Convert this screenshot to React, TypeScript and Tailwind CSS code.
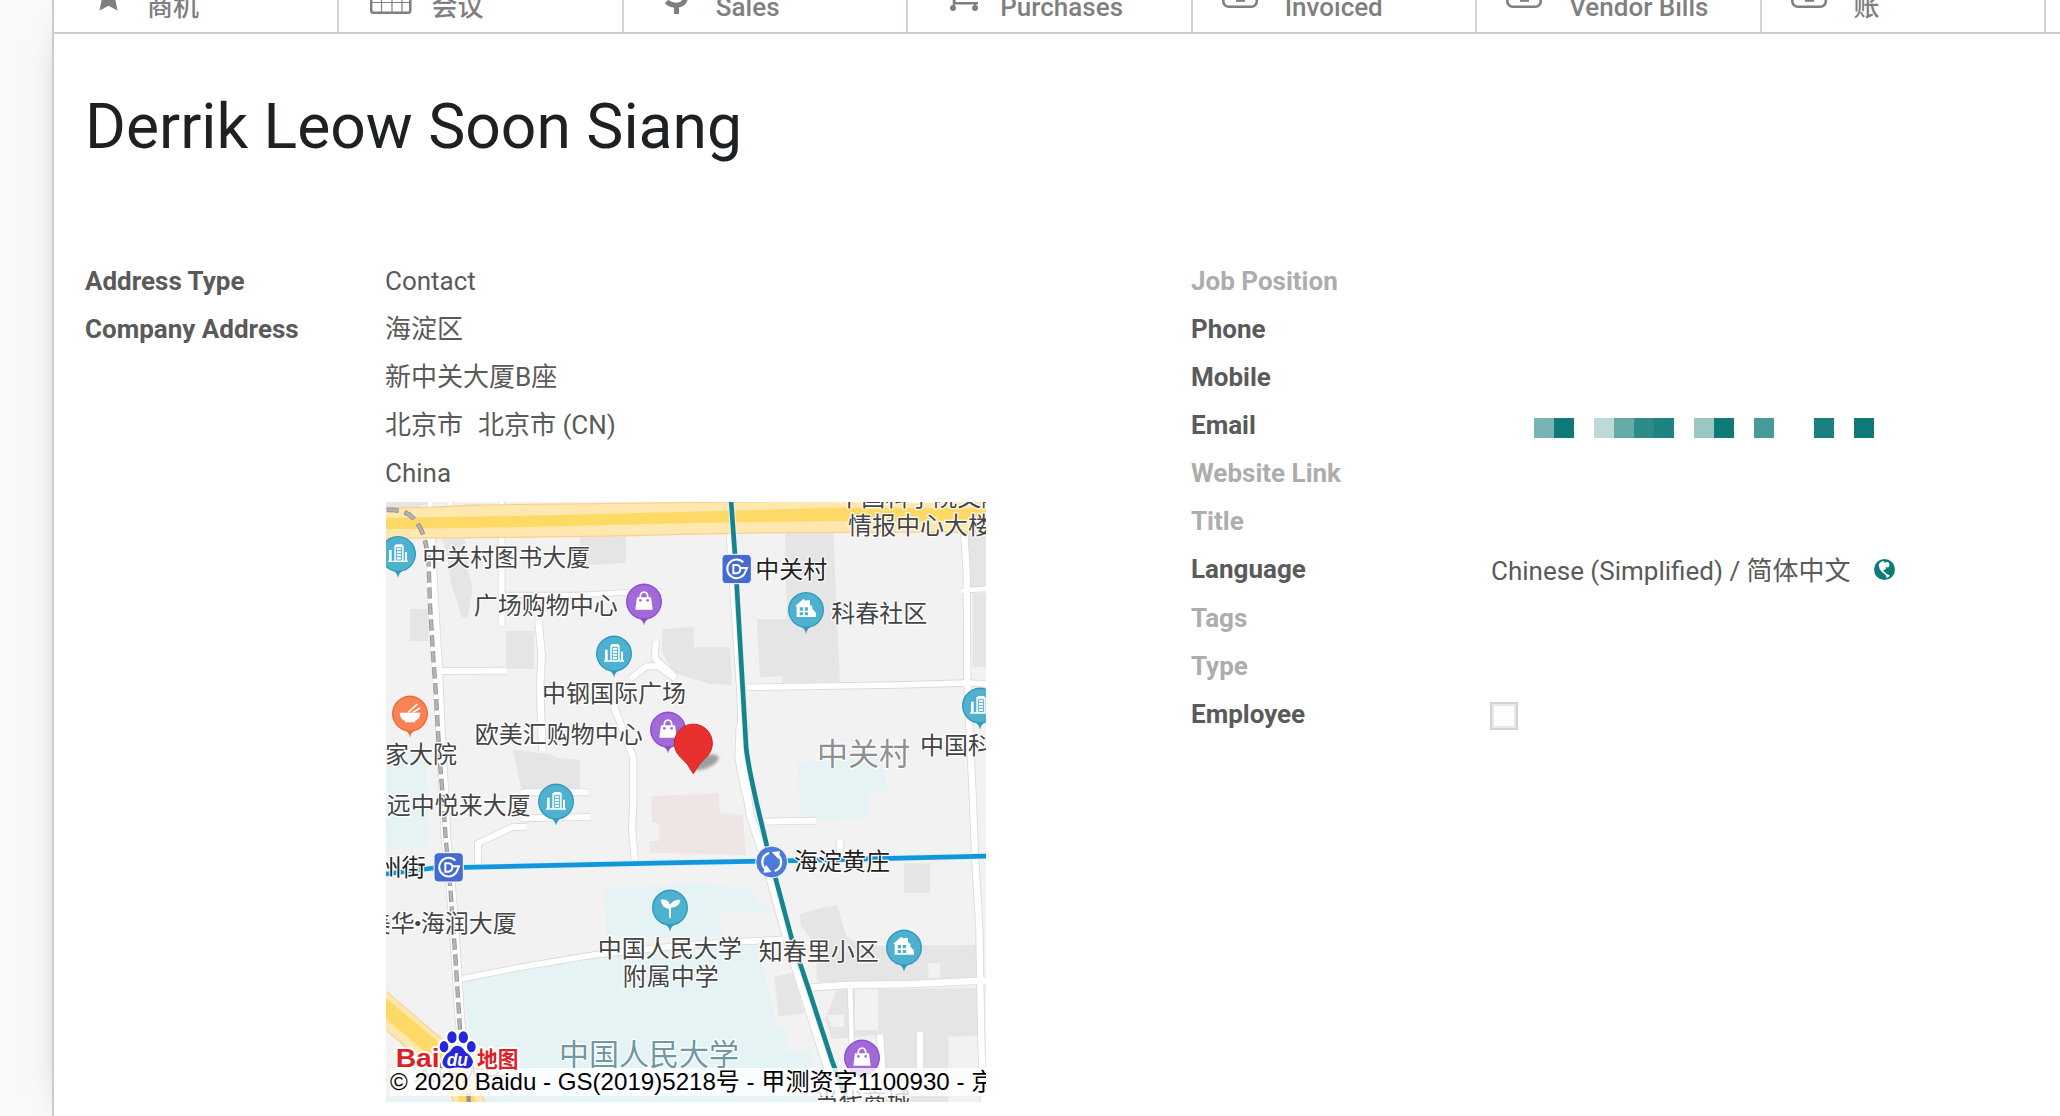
import React from "react";

const sans = "font-[Roboto,'Noto_Sans_CJK_SC',sans-serif]";

const icons: Record<string, React.ReactNode> = {
  star: <path fill="#7f7f7f" d="M53.5-19l4 9 9.500 1-7 7 2.500 12.500-9-4.700-9 4.700L47-2l-7-7 9.500-1z" />,
  calendar: (
    <g stroke="#7f7f7f" fill="none">
      <path strokeWidth="2.500" d="M32.200-10V10.500Q32.200 12.800 34.500 12.800H69Q71.300 12.800 71.300 10.500V-10" />
      <path strokeWidth="1.200" d="M42.500-8V12M53-8V12M63-8V12M32 2.500H71" />
    </g>
  ),
  dollar: (
    <g stroke="#7f7f7f" fill="none">
      <path strokeWidth="5" d="M42.500 1.500Q46.500 5.500 53 5.300Q61 4.500 61.500-3" />
      <path strokeWidth="5" d="M52.500 5V14" />
    </g>
  ),
  cart: (
    <g>
      <path d="M46-2V3.300H70" stroke="#7f7f7f" strokeWidth="2.600" fill="none" />
      <circle cx="45" cy="8" r="3" fill="#7f7f7f" />
      <circle cx="67" cy="8" r="3" fill="#7f7f7f" />
      <path d="M46.500 0L45.500 8M67 3V8" stroke="#7f7f7f" strokeWidth="2" />
    </g>
  ),
  money: (
    <g>
      <rect x="30.300" y="-18" width="33.500" height="24.700" rx="5.500" fill="none" stroke="#7f7f7f" strokeWidth="2.600" />
      <rect x="43" y="-3" width="9" height="4.800" fill="#7f7f7f" />
    </g>
  ),
};

const tabs = [
  ["star", "商机"],
  ["calendar", "会议"],
  ["dollar", "Sales"],
  ["cart", "Purchases"],
  ["money", "Invoiced"],
  ["money", "Vendor Bills"],
  ["money", "账"],
];

const emailBlocks: (string | null)[] = [
  "#78b4b2", "#0f7b78", null, "#bddad9", "#64aaa7", "#2d8b88", "#1f8481", null,
  "#9ac6c4", "#0f7b78", null, "#47999a", null, null, "#1a817e", null, "#0f7b78",
];

function GlobeIcon() {
  return (
    <svg className="h-[21px] w-[21px]" viewBox="0 0 63 63">
      <circle cx="31.500" cy="31.500" r="31.500" fill="#0f7b78" />
      <path
        fill="#fff"
        d="M14 16Q18 9 27 6L32 9 28 13 35 10 42 9Q48 12 46 21L42 26 38 23 35 26 37 29 31 32 27 37 33 39 36 44 43 47 48 50Q44 55 37 57L37 51 31 44 23 38 17 30 15 22z"
      />
    </svg>
  );
}

const greys = [
  "18,21 150,21 110,40 18,35",
  "185,130 255,130 265,230 278,285 262,372 245,365 212,260 200,170",
  "600,125 738,125 738,203 602,212",
  "90,342 145,342 145,438 90,438",
  "378,408 462,408 462,522 378,522",
  "848,402 940,396 942,457 1050,457 1056,570 990,566 930,550 880,530 845,470",
  "1215,112 1360,112 1380,560 1208,563 1205,543 1140,547 1130,372 1220,372",
  "1765,112 1818,112 1818,275 1765,275",
  "1778,295 1818,295 1818,515 1778,517",
  "398,763 460,772 510,778 525,788 600,795 600,880 425,884",
  "1260,1260 1280,1250 1370,1230 1400,1325 1440,1352 1790,1350 1790,1455 1310,1462 1310,1355 1262,1290",
  "1572,1105 1650,1105 1650,1193 1572,1193",
  "1183,1445 1240,1433 1272,1555 1195,1565",
  "1370,1483 1790,1480 1798,1622 1705,1625 1705,1821 1500,1821 1500,1620 1355,1632 1335,1572 1345,1550",
];

const teals = [
  "18,775 135,770 140,850 143,1055 18,1062",
  "1255,800 1400,795 1405,765 1500,775 1525,885 1465,897 1468,965 1310,978 1310,965 1258,960",
  "672,1182 980,1163 985,1168 1110,1180 1130,1225 1165,1233 1172,1252 1020,1248 1025,1325 870,1325 680,1322",
  "250,1460 600,1390 870,1355 1130,1345 1170,1500 1190,1600 1222,1605 1220,1668 1290,1667 1310,1821 18,1821 18,1800 290,1800",
];

const roads: [string, number][] = [
  ["M152 128L160 300 172 500 182 720 192 900 198 1030 212 1170 226 1350 238 1550 252 1720", 26],
  ["M150 15V38M210 15V36M365 15V30", 16],
  ["M365 125V390", 18],
  ["M372 300L600 300 740 292 848 290", 14],
  ["M475 377L485 480 480 580 487 768", 20],
  ["M180 528L380 527", 18],
  ["M828 437L824 490 885 545M750 552L800 514 835 514 885 550", 18],
  ["M700 630L742 740 760 790 760 920 756 1000 765 1100", 19],
  ["M422 895L440 892 625 892M422 970L632 966M440 995L395 997 294 1045 294 1108", 18],
  ["M240 1452L430 1415 640 1380 900 1352 1040 1342 1210 1333", 17],
  ["M1050 100L1056 200 1083 600 1086 700 1086 790 1110 960 1160 1110 1215 1310 1260 1460 1350 1740 1385 1830", 22],
  ["M1088 688L1084 790 1106 900", 36],
  ["M1100 577L1550 570 1760 564 1830 567", 17],
  ["M1752 105L1760 230 1762 560 1778 900 1786 1100 1798 1300 1804 1640 1812 1830", 19],
  ["M1745 289L1765 285 1830 281", 14],
  ["M1155 980L1220 978 1310 977", 18],
  ["M1380 1036V1090", 20],
  ["M1285 1478L1400 1470 1600 1467 1830 1456", 19],
  ["M1410 1465L1415 1645", 14],
  ["M1500 1618L1508 1740M1620 1612V1740", 19],
];

const railway = "M145 175L150 330 158 460 168 600 178 780 188 900 197 1030 211 1180 225 1370 236 1540 246 1700";
const lineTen = "M1053 15L1065 180 1098 750Q1100 790 1129 920L1160 1050 1235 1330 1285 1480 1357 1700 1405 1830";
const lineBlue = "M10 1138L160 1119 255 1117 900 1103 1240 1097 1830 1083";

const teal = "#4db1cf";
const tealEdge = "#3198ba";
type Glyph = "building" | "bag" | "house" | "bowl" | "sprout";

const glyphs: Record<Glyph, React.ReactNode> = {
  building: (
    <g>
      <path fill="#fff" d="M-27-12H-19V23H-27zM-11-24L-6-29H12L17-24V23H-11zM21-6H27V23H21zM-30 20H30V24H-30z" />
      <path stroke={teal} strokeWidth="3" fill="none" d="M-5-19H11V18H-5zM-5-10H11M-5-1H11M-5 8H11" />
    </g>
  ),
  bag: (
    <g>
      <path fill="#fff" d="M-21-13H21L26 24H-26z" />
      <path fill="none" stroke="#fff" strokeWidth="5" d="M-11-10V-18Q-10-28 0-29Q10-28 11-18V-10" />
      <circle cx="-11" cy="-4" r="4" fill="#a26ad8" />
      <circle cx="11" cy="-4" r="4" fill="#a26ad8" />
    </g>
  ),
  house: (
    <g>
      <path fill="#fff" d="M-32-12L-8-33 0-27V-29H12V-16L20-10 18-5 30 9V21H-28V-10z" />
      <path fill={teal} d="M-19-8H-9V2H-19zM-4-8H6V2H-4zM-19 7H-9V16H-19zM-4 7H6V16H-4z" />
    </g>
  ),
  bowl: (
    <g>
      <path fill="#fff" d="M-31-3H31Q30 16 15 22V26H-15V22Q-30 16-31-3z" />
      <path stroke="#fff" strokeWidth="5" d="M-6-3L22-29M8-3L30-17" />
    </g>
  ),
  sprout: (
    <g>
      <path fill="#fff" d="M-28-24Q-4-26 0-8Q8-24 31-24Q30-2 3 0V31H-3V4Q-26 0-28-24z" />
    </g>
  ),
};

function Pin({ x, y, glyph, fill = teal, edge = tealEdge }: { x: number; y: number; glyph: Glyph; fill?: string; edge?: string }) {
  return (
    <g transform={`translate(${x} ${y})`}>
      <path fill={edge} d="M0 72Q-3 55-14 52A54 54 0 1 1 14 52Q3 55 0 72z" />
      <circle r="50" fill={fill} />
      {glyphs[glyph]}
    </g>
  );
}

type Label = { t: string; x: number; y: number; size?: number; fill?: string };
const labels: Label[] = [
  { t: "中关村图书大厦", x: 127, y: 214 },
  { t: "广场购物中心", x: 281, y: 358 },
  { t: "中钢国际广场", x: 486, y: 622 },
  { t: "欧美汇购物中心", x: 284, y: 743 },
  { t: "家大院", x: 15, y: 803 },
  { t: "远中悦来大厦", x: 20, y: 957 },
  { t: "州街", x: -7, y: 1142, fill: "#222" },
  { t: "美华", x: -40, y: 1312 },
  { t: "海润大厦", x: 122, y: 1312 },
  { t: "·", x: 77, y: 1312 },
  { t: "中国人民大学", x: 653, y: 1385 },
  { t: "附属中学", x: 728, y: 1469 },
  { t: "知春里小区", x: 1136, y: 1396 },
  { t: "海淀黄庄", x: 1242, y: 1126, fill: "#222" },
  { t: "中关村", x: 1126, y: 250, fill: "#222" },
  { t: "科春社区", x: 1354, y: 382 },
  { t: "中国科学院文献", x: 1372, y: 32 },
  { t: "情报中心大楼", x: 1404, y: 118 },
  { t: "中国科", x: 1620, y: 777 },
  { t: "中关村", x: 1311, y: 811, size: 93, fill: "#8f8f8f" },
  { t: "中国人民大学", x: 537, y: 1710, size: 90, fill: "#6f98a3" },
  { t: "当代商城", x: 1304, y: 1844 },
  { t: "人民大学", x: 98, y: 1757, fill: "#777" },
];

function Station({ x, y }: { x: number; y: number }) {
  return (
    <g transform={`translate(${x} ${y})`}>
      <rect x="-44" y="-44" width="88" height="88" rx="12" fill="#456bd3" stroke="#fff" strokeWidth="3" />
      <g fill="none" stroke="#fff" strokeWidth="6">
        <path d="M20-20A28 28 0 1 0 27 6L31-3H12" />
        <path d="M-10-12H0Q11-11 11 0T0 13H-10z" />
      </g>
    </g>
  );
}

function CityMap() {
  return (
    <svg className="ml-px block h-[600px] w-[600px]" viewBox="18 21 1800 1800">
      <defs>
        <filter id="soft" x="-30%" y="-50%" width="160%" height="200%">
          <feGaussianBlur stdDeviation="4" />
        </filter>
      </defs>
      <rect x="18" y="21" width="1800" height="1800" fill="#f2f2f2" />
      {greys.map((p) => <polygon key={p} points={p} fill="#e5e5e5" />)}
      <path fill="#f2f2f2" d="M1645 1405H1680V1448H1645zM1425 1483H1495V1605H1425zM1340 1560L1392 1560V1595H1355z" />
      {teals.map((p) => <polygon key={p} points={p} fill="#e5f3f4" />)}
      <polygon points="815,903 1015,895 1020,955 1088,960 1098,1080 810,1073 810,1038 838,1038 838,985 815,983" fill="#efe5e4" />
      {roads.map(([d, w]) => <path key={d} d={d} fill="none" stroke="#d9d9d9" strokeWidth={w + 5} />)}
      {roads.map(([d, w]) => <path key={d} d={d} fill="none" stroke="#fff" strokeWidth={w} />)}

      <polygon points="10,38 130,38 290,30 920,23 1830,10 1830,112 1250,112 900,118 770,122 380,127 10,130" fill="#ffe7b0" stroke="#ffcf8a" strokeWidth="4" />
      <polygon points="10,68 450,62 900,51 1370,38 1830,40 1830,78 1370,78 900,85 450,96 10,103" fill="#ffd966" />
      <path d="M-10 1523L185 1690Q250 1740 272 1840" fill="none" stroke="#ffcf8a" strokeWidth="92" />
      <path d="M-10 1523L185 1690Q250 1740 272 1840" fill="none" stroke="#ffe7b0" strokeWidth="85" />
      <path d="M-10 1517L175 1672Q250 1730 266 1840" fill="none" stroke="#ffd966" strokeWidth="48" />

      <path d={railway} fill="none" stroke="#949494" strokeWidth="13" />
      <path d={railway} fill="none" stroke="#fff" strokeWidth="14" strokeDasharray="14 34" strokeDashoffset="-40" />
      <path d={railway} fill="none" stroke="#b5b5b5" strokeWidth="8" strokeDasharray="30 18" strokeDashoffset="-8" />
      <path d="M266 1795V1825" stroke="#949494" strokeWidth="13" />
      <path d="M20 45Q80 42 105 75Q130 105 140 160" fill="none" stroke="#949494" strokeWidth="14" strokeDasharray="36 18" />
      <path d="M22 45Q80 42 105 75Q130 105 140 160" fill="none" stroke="#b5b5b5" strokeWidth="8" strokeDasharray="32 22" />

      <path d={lineTen} fill="none" stroke="#e4f2f2" strokeWidth="20" />
      <path d={lineTen} fill="none" stroke="#17838d" strokeWidth="14" />
      <path d={lineBlue} fill="none" stroke="#e2f1fa" strokeWidth="20" />
      <path d={lineBlue} fill="none" stroke="#1296db" strokeWidth="14" />

      <Station x={1070} y={222} />
      <Station x={206} y={1117} />
      <g transform="translate(1175 1101)">
        <circle r="48" fill="#4a7bd8" stroke="#fff" strokeWidth="3" />
        <path d="M-8-27A28 28 0 0 0-17 22M9 27A28 28 0 0 0 17-22" fill="none" stroke="#fff" strokeWidth="7" />
        <path d="M0-30L25-32 21-8zM0 30L-25 32-17 8z" fill="#fff" />
      </g>

      <Pin x={54} y={177} glyph="building" />
      <Pin x={792} y={320} glyph="bag" fill="#a26ad8" edge="#8d4dd0" />
      <Pin x={702} y={476} glyph="building" />
      <Pin x={90} y={656} glyph="bowl" fill="#fa8355" edge="#ef6a3c" />
      <Pin x={864} y={704} glyph="bag" fill="#a26ad8" edge="#8d4dd0" />
      <Pin x={528} y={920} glyph="building" />
      <Pin x={1278} y={345} glyph="house" />
      <Pin x={1800} y={632} glyph="building" />
      <Pin x={870} y={1238} glyph="sprout" />
      <Pin x={1572} y={1358} glyph="house" />
      <Pin x={1446} y={1688} glyph="bag" fill="#a26ad8" edge="#8d4dd0" />

      {labels.map((l) => (
        <text key={`${l.t}${l.x}`} x={l.x} y={l.y} fontSize={l.size ?? 72} fill={l.fill ?? "#444"} stroke="#fff" strokeWidth="7" strokeLinejoin="round" paintOrder="stroke" className="font-['Noto_Sans_CJK_SC',sans-serif]">
          {l.t}
        </text>
      ))}

      <ellipse cx="972" cy="802" rx="46" ry="19" fill="#666" opacity="0.6" transform="rotate(-20 972 802)" filter="url(#soft)" />
      <path d="M940 836Q925 806 898 783A57 57 0 1 1 982 783Q955 806 940 836z" fill="#e8302f" stroke="#c52523" strokeWidth="3" />

      <rect x="30" y="1719" width="1788" height="84" fill="#fff" opacity="0.8" />
      <g stroke="#fff" strokeWidth="12" strokeLinejoin="round" paintOrder="stroke" className="font-['Liberation_Sans','Noto_Sans_CJK_SC',sans-serif] font-bold">
        <text x="47" y="1717" fontSize="80" fill="#dd1f26" textLength="132" lengthAdjust="spacingAndGlyphs">Bai</text>
        <text x="291" y="1715" fontSize="66" fill="#dd1f26" textLength="124" lengthAdjust="spacingAndGlyphs">地图</text>
        <g fill="#2626dc">
          <ellipse cx="216" cy="1627" rx="14" ry="18" />
          <ellipse cx="250" cy="1627" rx="14" ry="18" />
          <ellipse cx="192" cy="1655" rx="13" ry="17" />
          <ellipse cx="274" cy="1655" rx="13" ry="17" />
          <path d="M233 1652Q246 1652 256 1670Q280 1688 279 1702Q275 1722 256 1720Q233 1715 212 1720Q190 1722 187 1702Q188 1684 211 1668Q220 1652 233 1652z" />
        </g>
      </g>
      <text x="200" y="1713" fontSize="54" fill="#fff" textLength="64" lengthAdjust="spacingAndGlyphs" className="font-['Liberation_Sans',sans-serif] font-bold italic">du</text>
      <text x="30" y="1784" fontSize="72.300" fill="#000" className="font-['Liberation_Sans','Noto_Sans_CJK_SC',sans-serif]">
        © 2020 Baidu - GS(2019)5218号 - 甲测资字1100930 - 京
      </text>
    </svg>
  );
}

function Row({ label, muted, tall, children }: { label: string; muted?: boolean; tall?: boolean; children?: React.ReactNode }) {
  return (
    <div className={`flex items-start ${tall ? "h-[49px]" : "h-12"}`}>
      <div className={`w-[299px] font-bold ${muted ? "text-[#adadad]" : "text-[#5a5a5a]"}`}>{label}</div>
      {children}
    </div>
  );
}

export default function App() {
  return (
    <div className={`h-[1116px] w-[2060px] overflow-hidden bg-[#f9f9f9] pl-[52px] text-[#5a5a5a] ${sans}`}>
      <main className="h-full border-l-2 border-[#c8cdd2] bg-white shadow-[0_10px_40px_-30px_#000]">
        <nav className="flex h-[34px] overflow-hidden border-b-2 border-[#c9ccd0] text-[26px] text-[#7f7f7f]">
          <div className="ml-px grid w-[1991px] shrink-0 grid-cols-7">
            {tabs.map(([icon, text]) => (
              <div key={text} className="flex h-8 items-end border-r-2 border-[#d0d4dd]">
                <svg className="h-8 w-[92px] shrink-0" viewBox="0 0 92 32">{icons[icon]}</svg>
                <span className="mb-[10px] leading-[30px] font-medium whitespace-nowrap">{text}</span>
              </div>
            ))}
          </div>
        </nav>

        <div className="pl-[31px]">
          <h1 className="pt-[55px] text-[62.4px] leading-[76px] font-normal text-[#1d2124]">Derrik Leow Soon Siang</h1>

          <div className="flex pt-[101px] text-[26px] leading-[30px]">
            <section className="flex w-[1106px] items-start">
              <div className="w-[300px] shrink-0 font-bold">
                <div className="h-12">Address Type</div>
                <div className="h-12">Company Address</div>
              </div>
              <div>
                <div className="h-12">Contact</div>
                <div className="h-12">海淀区</div>
                <div className="h-12">新中关大厦B座</div>
                <div className="flex h-12 gap-[15px]">
                  <span>北京市</span>
                  <span>北京市 (CN)</span>
                </div>
                <div className="h-11">China</div>
                <CityMap />
              </div>
            </section>

            <section>
              <Row label="Job Position" muted />
              <Row label="Phone" />
              <Row label="Mobile" />
              <Row label="Email">
                <div className="flex pt-[8px] pl-[44px]">
                  {emailBlocks.map((c, i) => (
                    <div key={i} className="size-5" style={{ backgroundColor: c ?? "transparent" }} />
                  ))}
                </div>
              </Row>
              <Row label="Website Link" muted />
              <Row label="Title" muted />
              <Row label="Language" tall>
                <div className="flex pt-0.5 pl-px">
                  <span className="w-[383px]">Chinese (Simplified) / 简体中文</span>
                  <span className="pt-[3px]"><GlobeIcon /></span>
                </div>
              </Row>
              <Row label="Tags" muted />
              <Row label="Type" muted />
              <Row label="Employee">
                <div className="mt-[3px] size-7 border-2 border-[#d2d2d2] bg-[#fdfdfd] shadow-[inset_0_0_0_2px_#e9e9e9]" />
              </Row>
            </section>
          </div>
        </div>
      </main>
    </div>
  );
}
